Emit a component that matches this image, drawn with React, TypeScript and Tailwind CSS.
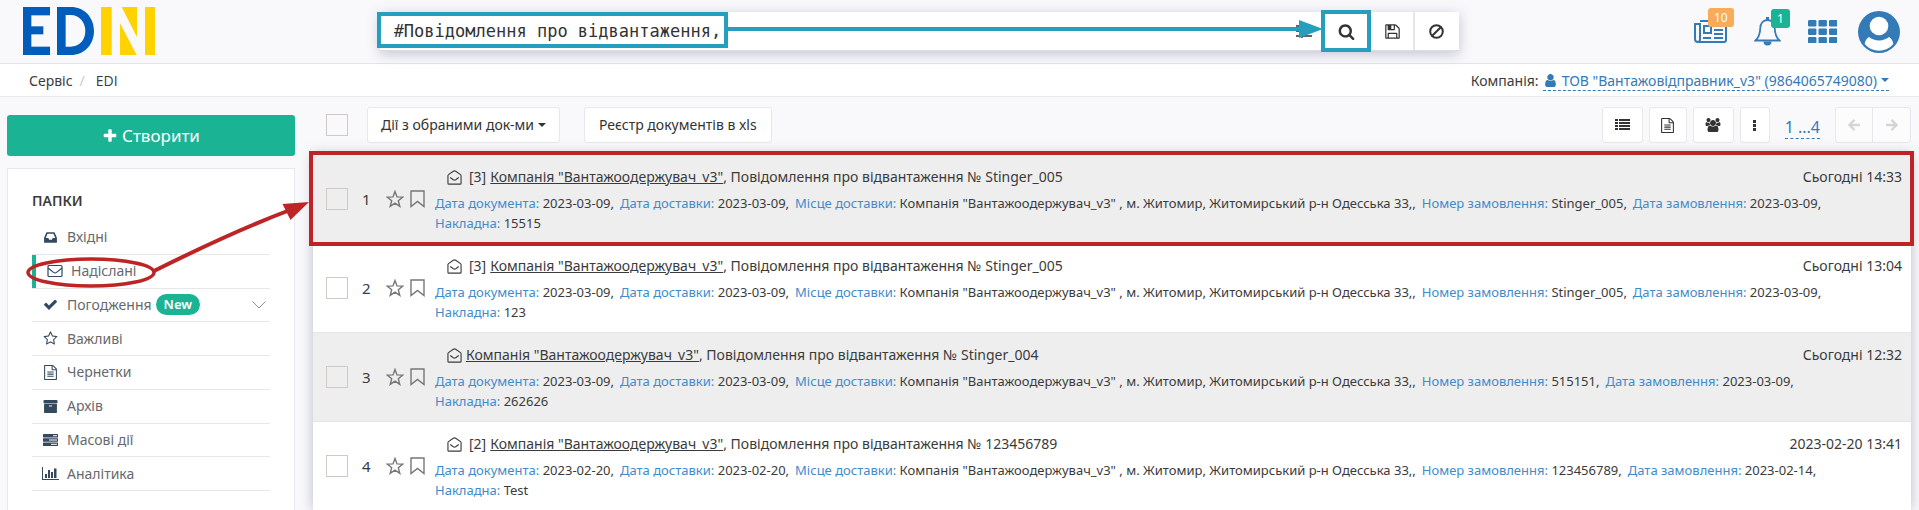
import type { ReactNode } from "react";

type IconProps = { className?: string };

const paths = {
  inbox:
    "M1151 960h316q-1-3-2.5-8.5t-2.5-7.5l-212-496h-708l-212 496q-1 3-2.5 8.5t-2.5 7.5h316l95 192h320zm513 30v482q0 26-19 45t-45 19h-1408q-26 0-45-19t-19-45v-482q0-62 25-123l238-552q10-25 36.5-42t52.5-17h832q26 0 52.5 17t36.5 42l238 552q25 61 25 123z",
  check:
    "M1671 566q0 40-28 68l-724 724-136 136q-28 28-68 28t-68-28l-136-136-362-362q-28-28-28-68t28-68l136-136q28-28 68-28t68 28l294 295 656-657q28-28 68-28t68 28l136 136q28 28 28 68z",
  star: "M1201 1004l306-297-422-62-189-382-189 382-422 62 306 297-73 421 378-199 377 199zm527-357q0 22-26 48l-363 354 86 500q1 7 1 20 0 50-41 50-19 0-40-12l-449-236-449 236q-22 12-40 12-21 0-31.5-14.5t-10.5-35.5q0-6 2-20l86-500-364-354q-25-27-25-48 0-37 56-46l502-73 225-455q19-41 49-41t49 41l225 455 502 73q56 9 56 46z",
  file: "M1596 380q28 28 48 76t20 88v1152q0 40-28 68t-68 28h-1344q-40 0-68-28t-28-68v-1600q0-40 28-68t68-28h896q40 0 88 20t76 48zm-444-244v376h376q-10-29-22-41l-313-313q-12-12-41-22zm384 1528v-1024h-416q-40 0-68-28t-28-68v-416h-768v1536h1280zm-1024-864q0-14 9-23t23-9h704q14 0 23 9t9 23v64q0 14-9 23t-23 9h-704q-14 0-23-9t-9-23v-64zm736 224q14 0 23 9t9 23v64q0 14-9 23t-23 9h-704q-14 0-23-9t-9-23v-64q0-14 9-23t23-9h704zm0 256q14 0 23 9t9 23v64q0 14-9 23t-23 9h-704q-14 0-23-9t-9-23v-64q0-14 9-23t23-9h704z",
  archive:
    "M1088 832q0-26-19-45t-45-19h-256q-26 0-45 19t-19 45 19 45 45 19h256q26 0 45-19t19-45zm576-192v960q0 26-19 45t-45 19h-1408q-26 0-45-19t-19-45v-960q0-26 19-45t45-19h1408q26 0 45 19t19 45zm64-448v256q0 26-19 45t-45 19h-1536q-26 0-45-19t-19-45v-256q0-26 19-45t45-19h1536q26 0 45 19t19 45z",
  search:
    "M1216 832q0-185-131.5-316.5t-316.5-131.5-316.5 131.5-131.5 316.5 131.5 316.5 316.5 131.5 316.5-131.5 131.5-316.5zm512 832q0 52-38 90t-90 38q-54 0-90-38l-343-342q-179 124-399 124-143 0-273.5-55.5t-225-150-150-225-55.5-273.5 55.5-273.5 150-225 225-150 273.5-55.5 273.5 55.5 225 150 150 225 55.5 273.5q0 220-124 399l343 343q37 37 37 90z",
  save: "M512 1536h768v-384h-768v384zm896 0h128v-896q0-14-10-38.5t-20-34.5l-281-281q-10-10-34-20t-39-10v416q0 40-28 68t-68 28h-576q-40 0-68-28t-28-68v-416h-128v1280h128v-416q0-40 28-68t68-28h832q40 0 68 28t28 68v416zm-384-928v-320q0-13-9.5-22.5t-22.5-9.5h-192q-13 0-22.5 9.5t-9.5 22.5v320q0 13 9.5 22.5t22.5 9.5h192q13 0 22.5-9.5t9.5-22.5zm640 32v928q0 40-28 68t-68 28h-1344q-40 0-68-28t-28-68v-1344q0-40 28-68t68-28h928q40 0 88 20t76 48l280 280q28 28 48 76t20 88z",
  plus: "M1600 736v192q0 40-28 68t-68 28h-416v416q0 40-28 68t-68 28h-192q-40 0-68-28t-28-68v-416h-416q-40 0-68-28t-28-68v-192q0-40 28-68t68-28h416v-416q0-40 28-68t68-28h192q40 0 68 28t28 68v416h416q40 0 68 28t28 68z",
  user: "M1536 1399q0 109-62.5 187t-150.5 78h-854q-88 0-150.5-78t-62.5-187q0-85 8.5-160.5t31.5-152 58.5-131 94-89 134.5-34.5q131 128 313 128t313-128q76 0 134.5 34.5t94 89 58.5 131 31.5 152 8.5 160.5zm-256-887q0 159-112.5 271.5t-271.5 112.5-271.5-112.5-112.5-271.5 112.5-271.5 271.5-112.5 271.5 112.5 112.5 271.5z",
};

function Glyph({ name, className }: IconProps & { name: keyof typeof paths }) {
  return (
    <svg viewBox="0 0 1792 1792" fill="currentColor" className={className} aria-hidden="true">
      <path d={paths[name]} />
    </svg>
  );
}

function UsersIcon({ className }: IconProps) {
  return (
    <svg viewBox="0 0 2048 1792" fill="currentColor" className={className} aria-hidden="true">
      <path d="M657 896q-162 5-265 128h-134q-82 0-138-40.5t-56-118.5q0-353 124-353 6 0 43.5 21t97.5 42.5 119 21.5q67 0 133-23-5 37-5 66 0 139 81 256zm1071 637q0 120-73 189.5t-194 69.5h-874q-121 0-194-69.5t-73-189.5q0-53 3.5-103.5t14-109 26.5-108.5 43-97.5 62-81 85.5-53.5 111.5-20q10 0 43 21.5t73 48 107 48 135 21.5 135-21.5 107-48 73-48 43-21.5q61 0 111.5 20t85.5 53.5 62 81 43 97.5 26.5 108.5 14 109 3.5 103.5zm-1024-1277q0 106-75 181t-181 75-181-75-75-181 75-181 181-75 181 75 75 181zm704 384q0 159-112.5 271.5t-271.5 112.5-271.5-112.5-112.5-271.5 112.5-271.5 271.5-112.5 271.5 112.5 112.5 271.5zm576 225q0 78-56 118.5t-138 40.5h-134q-103-123-265-128 81-117 81-256 0-29-5-66 66 23 133 23 59 0 119-21.5t97.5-42.5 43.5-21q124 0 124 353zm-128-609q0 106-75 181t-181 75-181-75-75-181 75-181 181-75 181 75 75 181z" />
    </svg>
  );
}

function Logo() {
  return (
    <svg viewBox="0 0 396 144" className="h-12 w-[132px]" role="img" aria-label="EDIN">
      <g fill="#005dbb">
        <rect width="25" height="144" />
        <rect width="81" height="25" />
        <rect y="58" width="61" height="24" />
        <rect y="119" width="81" height="25" />
        <path
          fillRule="evenodd"
          d="M102 0h41c41 0 70 31 70 72s-29 72-70 72h-41zM128 24v95h15c26 0 44-20 44-47s-18-48-44-48z"
        />
      </g>
      <g fill="#ffd200">
        <rect x="234" width="32" height="144" />
        <path d="M291 49l50 95h-50z" />
        <path d="M296 0h46v91z" />
        <rect x="366" width="30" height="144" />
      </g>
    </svg>
  );
}

function EnvelopeIcon({ className }: IconProps) {
  return (
    <svg viewBox="0 0 16 14" fill="none" stroke="currentColor" strokeWidth="1.2" className={className} aria-hidden="true">
      <rect x="1" y="1.5" width="14" height="11" rx="1" />
      <path d="M1 4c2.500 2 4 3.200 5.500 4.400 1 .8 2 .8 3 0C11 7.200 12.500 6 15 4" />
    </svg>
  );
}

function EnvelopeOpenIcon({ className }: IconProps) {
  return (
    <svg viewBox="0 0 16 16" fill="none" stroke="currentColor" strokeWidth="1.2" className={className} aria-hidden="true">
      <path d="M1 6c0-.5.200-.8.600-1.100L6.700 1.300c.8-.5 1.800-.5 2.600 0l5.100 3.600c.4.300.6.600.6 1.100v8c0 .6-.4 1-1 1H2c-.6 0-1-.4-1-1z" />
      <path d="M3.500 8l3.200 2.400c.8.500 1.800.5 2.600 0L12.500 8" />
    </svg>
  );
}

function ServerIcon({ className }: IconProps) {
  return (
    <svg viewBox="0 0 15 12" className={className} aria-hidden="true">
      {[0, 4.300, 8.600].map((y) => (
        <rect key={y} y={y} width="15" height="3.400" rx="0.500" fill="currentColor" />
      ))}
      <g fill="#fff">
        <rect x="10" y="1.200" width="4" height="1" />
        <rect x="6" y="5.500" width="8" height="1" />
        <rect x="8" y="9.800" width="6" height="1" />
      </g>
    </svg>
  );
}

function ChartIcon({ className }: IconProps) {
  return (
    <svg viewBox="0 0 17 13" fill="currentColor" className={className} aria-hidden="true">
      <path d="M0 0h1v12h16v1H0z" />
      <rect x="3" y="7" width="2" height="4" />
      <rect x="6" y="3" width="2" height="8" />
      <rect x="9" y="5" width="2" height="6" />
      <rect x="12" y="1.500" width="2.500" height="9.500" />
    </svg>
  );
}

function BookmarkIcon({ className }: IconProps) {
  return (
    <svg viewBox="0 0 15 18" fill="none" stroke="currentColor" strokeWidth="1.400" className={className} aria-hidden="true">
      <path d="M1 1h13v15.500l-6.500-5-6.500 5z" />
    </svg>
  );
}

function StarIcon({ className }: IconProps) {
  return (
    <svg viewBox="0 0 18 18" fill="none" stroke="currentColor" strokeWidth="1.400" className={className} aria-hidden="true">
      <path d="M9 1.500l2 5.400 5.800.2-4.500 3.600 1.500 5.700L9 13.200l-4.800 3.200 1.500-5.700L1.200 7.100 7 6.900z" />
    </svg>
  );
}

function ArrowIcon({ className, right }: IconProps & { right?: boolean }) {
  return (
    <svg viewBox="0 0 12 12" fill="none" stroke="currentColor" strokeWidth="2.4" className={className} aria-hidden="true">
      <path d={right ? "M0 6h10.500M5.500.900L10.600 6l-5.100 5.100" : "M12 6H1.500M6.500.900L1.400 6l5.100 5.100"} />
    </svg>
  );
}

function Caret() {
  return (
    <svg viewBox="0 0 8 4" fill="currentColor" className="h-1 w-2" aria-hidden="true">
      <path d="M0 0h8L4 4z" />
    </svg>
  );
}

function NewsIcon() {
  return (
    <svg viewBox="0 0 33 23" fill="none" stroke="currentColor" strokeWidth="2" className="h-[23px] w-[33px]" aria-hidden="true">
      <path d="M6 1h26v19c0 1.200-.8 2-2 2H4c-2 0-3-1-3-3V4h5v15c0 2-1 3-2 3" />
      <rect x="10" y="6" width="7" height="7" />
      <path d="M20 6h9M20 10h9M20 14h9M9 18h8M20 18h9" />
    </svg>
  );
}

function BellIcon() {
  return (
    <svg viewBox="0 0 27 29" className="h-[29px] w-[27px]" aria-hidden="true">
      <path
        d="M13.500 3C9 3 6.500 6.500 6.300 11c-.2 5.500-1.500 9.500-4.800 12.500h24c-3.300-3-4.600-7-4.800-12.500C20.500 6.500 18 3 13.500 3z"
        fill="none"
        stroke="currentColor"
        strokeWidth="1.800"
      />
      <path d="M12 0h3v3h-3zM9.500 24.500h8a4 4 0 0 1-8 0z" fill="currentColor" />
    </svg>
  );
}

function GridIcon() {
  return (
    <svg viewBox="0 0 29 23" fill="currentColor" className="h-[23px] w-[29px]" aria-hidden="true">
      {[0, 8.500, 17].map((y) =>
        [0, 10.500, 21].map((x) => <rect key={`${x}-${y}`} x={x} y={y} width="8.400" height="6.400" rx="1.200" />),
      )}
    </svg>
  );
}

function AvatarIcon() {
  return (
    <svg viewBox="0 0 42 42" className="size-[42px]" aria-hidden="true">
      <circle cx="21" cy="21" r="21" fill="currentColor" />
      <path d="M11 26c-2.500 1.500-4 4-4.300 7a18.500 18.500 0 0 0 28.600 0c-.3-3-1.800-5.500-4.300-7-5.500 4.500-14.500 4.500-20 0z" fill="#fff" />
      <circle cx="21" cy="15" r="9.300" fill="#fff" />
    </svg>
  );
}

const folders: { label: string; icon: ReactNode; selected?: boolean; isNew?: boolean }[] = [
  { label: "Вхідні", icon: <Glyph name="inbox" className="size-[15px]" /> },
  { label: "Надіслані", icon: <EnvelopeIcon className="h-[14px] w-4" />, selected: true },
  { label: "Погодження", icon: <Glyph name="check" className="size-[15px]" />, isNew: true },
  { label: "Важливі", icon: <Glyph name="star" className="size-[15px]" /> },
  { label: "Чернетки", icon: <Glyph name="file" className="size-[15px]" /> },
  { label: "Архів", icon: <Glyph name="archive" className="size-[15px]" /> },
  { label: "Масові дії", icon: <ServerIcon className="h-3 w-[15px]" /> },
  { label: "Аналітика", icon: <ChartIcon className="h-[13px] w-[17px]" /> },
];

const documents = [
  { count: "[3]", number: "Stinger_005", time: "Сьогодні 14:33", date: "2023-03-09", order: "Stinger_005", orderDate: "2023-03-09", invoice: "15515" },
  { count: "[3]", number: "Stinger_005", time: "Сьогодні 13:04", date: "2023-03-09", order: "Stinger_005", orderDate: "2023-03-09", invoice: "123" },
  { count: "", number: "Stinger_004", time: "Сьогодні 12:32", date: "2023-03-09", order: "515151", orderDate: "2023-03-09", invoice: "262626" },
  { count: "[2]", number: "123456789", time: "2023-02-20 13:41", date: "2023-02-20", order: "123456789", orderDate: "2023-02-14", invoice: "Test" },
];

function Tick({ label }: { label: string }) {
  return (
    <input
      type="checkbox"
      aria-label={label}
      className="size-[22px] shrink-0 appearance-none border border-[#cfcac4] bg-transparent"
    />
  );
}

function Field({ name, children }: { name: string; children: ReactNode }) {
  return (
    <span className="mr-[6px] inline-block">
      <span className="text-[#428bca]">{name}:</span> {children}
    </span>
  );
}

function Header() {
  return (
    <header className="flex h-16 items-center border-b border-[#e4e5ea] pr-[19px] pl-[23px]">
      <div className="flex w-[19%] -translate-y-px">
        <a href="#home">
          <Logo />
        </a>
      </div>
      <form className="relative flex h-[39px] w-[57.5%] border-b border-[#dcdde3] bg-white shadow-[0_3px_12px_rgba(90,95,140,0.35)]">
        <input
          type="text"
          aria-label="Пошук"
          defaultValue="#Повідомлення про відвантаження,"
          className="h-[38px] min-w-0 flex-1 bg-transparent pl-[14px] font-['DejaVu_Sans_Mono',monospace] text-[17px] text-[#333] outline-none"
        />
        <button type="button" aria-label="Фільтри" className="flex w-[60px] items-center justify-center pl-6 text-[#333]">
          <svg viewBox="0 0 16 14" stroke="currentColor" strokeWidth="1.500" className="h-[14px] w-4" aria-hidden="true">
            <path d="M0 2h16M0 7h16M0 12h16M4 0v4M11 5v4M6 10v4" />
          </svg>
        </button>
        <button type="submit" aria-label="Знайти" className="flex w-[50px] items-center justify-center text-[#333]">
          <Glyph name="search" className="size-[17px]" />
        </button>
        <button type="button" aria-label="Зберегти" className="flex w-[43px] items-center justify-center border-r-2 border-[#e7e7ea] text-[#333]">
          <Glyph name="save" className="size-[17px]" />
        </button>
        <button type="button" aria-label="Очистити" className="flex w-11 items-center justify-center text-[#333]">
          <svg viewBox="0 0 15 15" fill="none" stroke="currentColor" strokeWidth="2" className="size-[15px]" aria-hidden="true">
            <circle cx="7.500" cy="7.500" r="6.300" />
            <path d="M3.200 11.800l8.600-8.600" />
          </svg>
        </button>
        <div className="pointer-events-none absolute top-0 -left-[3px] h-9 w-[351px] border-4 border-[#269fbf]" />
        <div className="pointer-events-none absolute top-[15px] right-[150px] left-[348px] h-1 bg-[#269fbf]" />
        <svg viewBox="0 0 24 18" className="pointer-events-none absolute top-2 right-[136px] h-[18px] w-6" aria-hidden="true">
          <path d="M0 0l24 9-24 9z" fill="#269fbf" />
        </svg>
        <div className="pointer-events-none absolute -top-[2px] right-[88px] h-[42px] w-[50px] border-4 border-[#269fbf]" />
      </form>
      <nav className="flex flex-1 items-center justify-end gap-[27px] text-[#337ab7]">
        <a href="#news" aria-label="Новини" className="relative">
          <NewsIcon />
          <span className="absolute -top-3 left-[14px] rounded-[3px] bg-[#f8ac59] px-[6px] text-xs leading-[19px] text-white">10</span>
        </a>
        <a href="#alerts" aria-label="Сповіщення" className="relative">
          <BellIcon />
          <span className="absolute -top-2 left-[17px] rounded-[3px] bg-[#1ab394] px-[6px] text-xs leading-[19px] text-white">1</span>
        </a>
        <a href="#apps" aria-label="Сервіси">
          <GridIcon />
        </a>
        <a href="#profile" aria-label="Профіль" className="-ml-[6px]">
          <AvatarIcon />
        </a>
      </nav>
    </header>
  );
}

function Sidebar() {
  return (
    <aside className="relative flex w-72 shrink-0 flex-col gap-3 pt-[18px]">
      <button type="button" className="flex h-[41px] items-center justify-center gap-1 rounded-[3px] bg-[#1ab394] text-[17px] text-white">
        <Glyph name="plus" className="size-4" />
        Створити
      </button>
      <div className="flex-1 border border-b-0 border-[#e7e7f0] bg-white pr-6 pl-6">
        <h2 className="pt-[22px] text-sm leading-5 font-semibold">ПАПКИ</h2>
        <ul className="mt-[10px] grid h-[270px] grid-rows-8 text-sm text-[#676a6c]">
          {folders.map((f) => (
            <li key={f.label} className="border-b border-[#e7e7e7]">
              <a
                href="#folder"
                className={
                  f.selected
                    ? "flex h-full items-center border-l-4 border-[#1ab394] pl-[10px]"
                    : "flex h-full items-center pl-[10px]"
                }
              >
                <span className="flex w-[17px] justify-center text-[#34495e]">{f.icon}</span>
                <span className="ml-2">{f.label}</span>
                {f.isNew && (
                  <>
                    <span className="ml-1 rounded-full bg-[#1ab394] px-2 text-[13px] leading-[21px] font-semibold text-white">New</span>
                    <svg viewBox="0 0 14 8" fill="none" stroke="#8193a5" className="mr-1 ml-auto h-2 w-[14px]" aria-hidden="true">
                      <path d="M.5.500L7 7 13.500.500" />
                    </svg>
                  </>
                )}
              </a>
            </li>
          ))}
        </ul>
      </div>
      <svg viewBox="0 0 300 100" fill="none" className="pointer-events-none absolute top-[98px] left-[13px] z-10 h-[100px] w-[300px]" aria-hidden="true">
        <ellipse cx="71" cy="77.500" rx="63" ry="13.500" stroke="#bd2426" strokeWidth="3.500" />
        <path d="M134 76C180 53 220 34 270 15" stroke="#bd2426" strokeWidth="4" />
        <path d="M289 7l-26.500 2 8 16z" fill="#bd2426" />
      </svg>
    </aside>
  );
}

const toolButton = "flex h-9 items-center justify-center rounded-[3px] border border-[#e7e7ec] bg-white text-[#333]";

function Toolbar() {
  return (
    <div className="flex items-center pt-[10px] pb-[11px] pl-[13px] text-sm">
      <div className="flex items-start">
        <Tick label="Обрати всі" />
      </div>
      <button type="button" className={`${toolButton} ml-[19px] gap-1 px-[13px]`}>
        Дії з обраними док-ми
        <Caret />
      </button>
      <button type="button" className={`${toolButton} ml-6 px-[14px]`}>
        Реєстр документів в xls
      </button>
      <div className="ml-auto flex items-center gap-[6px]">
        <button type="button" aria-label="Список" className={`${toolButton} w-[41px]`}>
          <svg viewBox="0 0 15 12" fill="currentColor" className="h-3 w-[15px]" aria-hidden="true">
            <path d="M0 0h3v2H0zM4 0h11v2H4zM0 3h3v2H0zM4 3h11v2H4zM0 6h3v2H0zM4 6h11v2H4zM0 9h3v2H0zM4 9h11v2H4z" />
          </svg>
        </button>
        <button type="button" aria-label="Документ" className={`${toolButton} w-[38px]`}>
          <Glyph name="file" className="size-[15px]" />
        </button>
        <button type="button" aria-label="Користувачі" className={`${toolButton} w-[41px]`}>
          <UsersIcon className="h-[14px] w-4" />
        </button>
        <button type="button" aria-label="Ще" className={`${toolButton} w-[30px]`}>
          <svg viewBox="0 0 3 11" fill="currentColor" className="h-[11px] w-[3px]" aria-hidden="true">
            <path d="M0 0h3v3H0zM0 4h3v3H0zM0 8h3v3H0z" />
          </svg>
        </button>
      </div>
      <a href="#pages" className="ml-[15px] border-b border-dashed border-[#337ab7] pt-1 text-base leading-[22px] text-[#337ab7]">
        1 ...4
      </a>
      <div className="ml-[15px] flex text-[#d5d5d5]">
        <button type="button" disabled aria-label="Назад" className="flex h-9 w-[38px] items-center justify-center rounded-l-[3px] border border-[#e7e7ec] bg-[#fcfcfd]">
          <ArrowIcon className="size-3" />
        </button>
        <button type="button" disabled aria-label="Вперед" className="-ml-px flex h-9 w-[39px] items-center justify-center rounded-r-[3px] border border-[#e7e7ec] bg-[#fcfcfd]">
          <ArrowIcon right className="size-3" />
        </button>
      </div>
    </div>
  );
}

function DocumentList() {
  return (
    <ul className="relative flex-1 bg-white shadow-[0_0_12px_rgba(90,95,140,0.4)]">
      {documents.map((d, i) => (
        <li key={i} className="flex items-center border-t border-[#e3e6e8] px-[13px] pr-[9px] odd:bg-[#eee]">
          <Tick label={`Обрати документ ${i + 1}`} />
          <span className="w-[38px] pl-[14px] text-[15px]">{i + 1}</span>
          <button type="button" aria-label="Важливе" className="text-[#777]">
            <StarIcon className="size-[18px]" />
          </button>
          <button type="button" aria-label="Закладка" className="ml-[6px] text-[#777]">
            <BookmarkIcon className="h-[18px] w-[15px]" />
          </button>
          <div className="min-w-0 flex-1 pt-[10px] pb-[10px] pl-[10px]">
            <div className="flex items-center pl-3 text-sm leading-6">
              <EnvelopeOpenIcon className="size-[15px]" />
              {d.count && <span className="ml-[7px]">{d.count}</span>}
              <span className="ml-1">
                <a href="#document" className="underline">
                  Компанія "Вантажоодержувач_v3"
                </a>
                , Повідомлення про відвантаження № {d.number}
              </span>
              <time className="ml-auto">{d.time}</time>
            </div>
            <div className="mt-1 pr-4 text-[13px] leading-5">
              <Field name="Дата документа">{d.date},</Field>
              <Field name="Дата доставки">{d.date},</Field>
              <Field name="Місце доставки">Компанія "Вантажоодержувач_v3" , м. Житомир, Житомирський р-н Одесська 33,,</Field>
              <Field name="Номер замовлення">{d.order},</Field>
              <Field name="Дата замовлення">{d.orderDate},</Field>
              <Field name="Накладна">{d.invoice}</Field>
            </div>
          </div>
        </li>
      ))}
      <li aria-hidden="true" className="pointer-events-none absolute -top-[3px] -right-[3px] -left-1 h-[95px] border-4 border-[#bd2426]" />
    </ul>
  );
}

export default function App() {
  return (
    <div className="flex min-h-screen flex-col bg-[#f9f9fb] font-['Noto_Sans','Open_Sans',sans-serif] text-[#3b3b3b]">
      <Header />
      <div className="flex h-[33px] items-center justify-between border-b border-[#e7e7ec] bg-white pt-px pr-[30px] pl-[29px] text-sm">
        <nav className="flex gap-[7px]">
          <a href="#service">Сервіс</a>
          <span className="text-[#ccc]">/</span>
          <a href="#edi" className="ml-1 font-['Open_Sans',sans-serif]">EDI</a>
        </nav>
        <div className="flex items-center gap-1">
          Компанія:
          <a href="#company" className="flex items-center gap-1 border-b border-dashed border-[#337ab7] leading-[19px] text-[#337ab7]">
            <Glyph name="user" className="size-[15px]" />
            ТОВ "Вантажовідправник_v3" (9864065749080)
            <Caret />
          </a>
        </div>
      </div>
      <div className="flex flex-1 gap-[18px] pr-2 pl-[7px]">
        <Sidebar />
        <main className="flex min-w-0 flex-1 flex-col">
          <Toolbar />
          <DocumentList />
        </main>
      </div>
    </div>
  );
}
